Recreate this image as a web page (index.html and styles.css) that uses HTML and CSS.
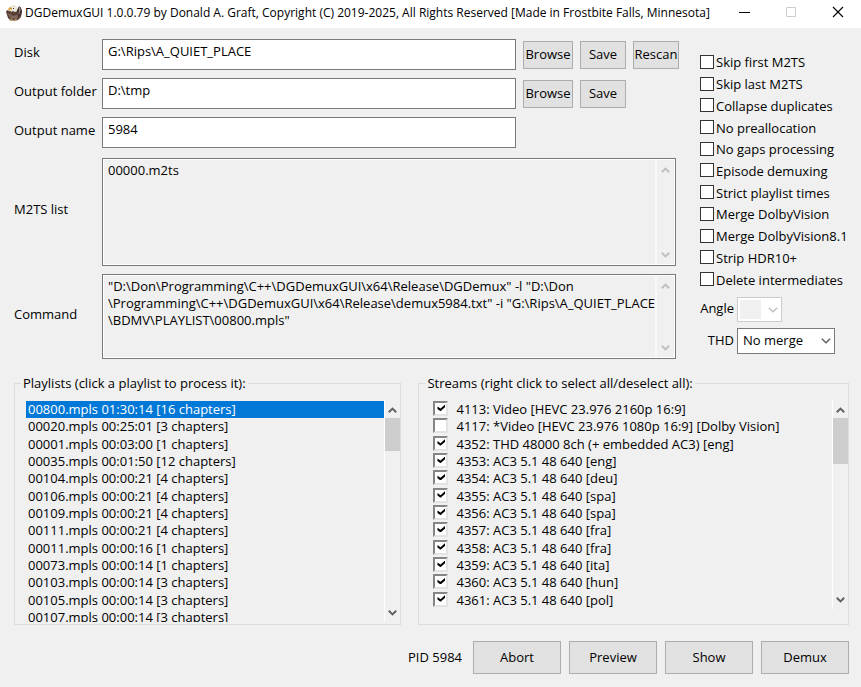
FILE: index.html
```html
<!DOCTYPE html>
<html lang="en">
<head>
    <meta charset="UTF-8">
    <meta name="viewport" content="width=device-width, initial-scale=1.0">
    <title>DGDemuxGUI</title>
    <link rel="stylesheet" href="styles.css">
</head>
<body>
    <svg class="defs" width="0" height="0" aria-hidden="true">
        <symbol id="up" viewBox="0 0 9 6"><path d="M0.8 5.2 4.5 1.6 8.2 5.2" fill="none" stroke="currentColor" stroke-width="2"/></symbol>
        <symbol id="down" viewBox="0 0 9 6"><path d="M0.8 0.8 4.5 4.4 8.2 0.8" fill="none" stroke="currentColor" stroke-width="2"/></symbol>
        <symbol id="drop" viewBox="0 0 10 6"><path d="M0.8 0.8 5 4.8 9.2 0.8" fill="none" stroke="currentColor" stroke-width="1.5"/></symbol>
    </svg>

    <header class="titlebar">
        <svg class="app-icon" viewBox="0 0 16 16" aria-hidden="true">
            <path d="M0 7 1 5l2 1 2-1 6 1 2-1 1-3 1 1 1 4-1 5-3 3-4 1-1-1-2 1-3-3-1-3z" fill="#5b4137"/>
            <path d="M1 8l3 1 3 2 4-1 2-3 1 2-3 4-4 1-3-2z" fill="#80685c"/>
            <path d="M11 5l2-4 2 2 1 4-2 4-2 1z" fill="#443331"/>
            <path d="M13 2l1 4M14 3l-1 6" stroke="#9b8880" fill="none"/>
            <path d="M4 2 6 0h3l2 2v4L9 7 7 6 5 7 4 5z" fill="#eee9df"/>
            <path d="M2 4l2-2 2 1v2L4 4 3 6z" fill="#d99b35"/>
            <path d="M7 3h1v1H7z" fill="#333"/>
            <path d="M4 13l2 1 1 2H5zm5 1 2-1-1 3H8z" fill="#b69a68"/>
        </svg>
        <h1>DGDemuxGUI 1.0.0.79 by Donald A. Graft, Copyright (C) 2019-2025, All Rights Reserved [Made in Frostbite Falls, Minnesota]</h1>
        <div class="window-buttons">
            <button type="button" aria-label="Minimize"><svg width="12" height="12" viewBox="0 0 12 12"><path d="M1 6.5h11" stroke="#000" fill="none"/></svg></button>
            <button type="button" aria-label="Maximize" disabled><svg width="12" height="12" viewBox="0 0 12 12"><path d="M1.5 1.5h9v9h-9z" stroke="#ccc" fill="none"/></svg></button>
            <button type="button" aria-label="Close"><svg width="12" height="12" viewBox="0 0 12 12"><path d="M1 1l10 10M11 1 1 11" stroke="#000" stroke-width="1.1" fill="none"/></svg></button>
        </div>
    </header>

    <main class="window">
        <div class="top">
            <div class="form">
                <label for="disk">Disk</label>
                <input class="field" type="text" id="disk" value="G:\Rips\A_QUIET_PLACE">
                <button type="button" class="btn">Browse</button>
                <button type="button" class="btn">Save</button>
                <button type="button" class="btn">Rescan</button>

                <label for="folder">Output folder</label>
                <input class="field" type="text" id="folder" value="D:\tmp">
                <button type="button" class="btn">Browse</button>
                <button type="button" class="btn">Save</button>

                <label class="first" for="name">Output name</label>
                <input class="field" type="text" id="name" value="5984">

                <label class="first" for="m2ts">M2TS list</label>
                <div class="memo m2ts">
                    <textarea id="m2ts" readonly>00000.m2ts</textarea>
                    <div class="scrollbar off"><svg><use href="#up"/></svg><svg><use href="#down"/></svg></div>
                </div>

                <label class="first" for="command">Command</label>
                <div class="memo command">
                    <textarea id="command" readonly>"D:\Don\Programming\C++\DGDemuxGUI\x64\Release\DGDemux" -l "D:\Don
\Programming\C++\DGDemuxGUI\x64\Release\demux5984.txt" -i "G:\Rips\A_QUIET_PLACE
\BDMV\PLAYLIST\00800.mpls"</textarea>
                    <div class="scrollbar off"><svg><use href="#up"/></svg><svg><use href="#down"/></svg></div>
                </div>
            </div>

            <div class="options">
                <div class="checks">
                    <label><input type="checkbox">Skip first M2TS</label>
                    <label><input type="checkbox">Skip last M2TS</label>
                    <label><input type="checkbox">Collapse duplicates</label>
                    <label><input type="checkbox">No preallocation</label>
                    <label><input type="checkbox">No gaps processing</label>
                    <label><input type="checkbox">Episode demuxing</label>
                    <label><input type="checkbox">Strict playlist times</label>
                    <label><input type="checkbox">Merge DolbyVision</label>
                    <label><input type="checkbox">Merge DolbyVision8.1</label>
                    <label><input type="checkbox">Strip HDR10+</label>
                    <label><input type="checkbox">Delete intermediates</label>
                </div>
                <div class="combos">
                    <label for="angle">Angle</label>
                    <div class="combo small">
                        <select id="angle" disabled></select>
                        <svg><use href="#drop"/></svg>
                    </div>
                    <label for="thd">THD</label>
                    <div class="combo">
                        <select id="thd"><option>No merge</option></select>
                        <svg><use href="#drop"/></svg>
                    </div>
                </div>
            </div>
        </div>

        <div class="groups">
            <fieldset class="group playlists">
                <legend>Playlists (click a playlist to process it):</legend>
                <div class="listbox">
                    <div class="view">
                        <div class="rows">
                            <label><input type="radio" name="playlist" checked>00800.mpls 01:30:14 [16 chapters]</label>
                            <label><input type="radio" name="playlist">00020.mpls 00:25:01 [3 chapters]</label>
                            <label><input type="radio" name="playlist">00001.mpls 00:03:00 [1 chapters]</label>
                            <label><input type="radio" name="playlist">00035.mpls 00:01:50 [12 chapters]</label>
                            <label><input type="radio" name="playlist">00104.mpls 00:00:21 [4 chapters]</label>
                            <label><input type="radio" name="playlist">00106.mpls 00:00:21 [4 chapters]</label>
                            <label><input type="radio" name="playlist">00109.mpls 00:00:21 [4 chapters]</label>
                            <label><input type="radio" name="playlist">00111.mpls 00:00:21 [4 chapters]</label>
                            <label><input type="radio" name="playlist">00011.mpls 00:00:16 [1 chapters]</label>
                            <label><input type="radio" name="playlist">00073.mpls 00:00:14 [1 chapters]</label>
                            <label><input type="radio" name="playlist">00103.mpls 00:00:14 [3 chapters]</label>
                            <label><input type="radio" name="playlist">00105.mpls 00:00:14 [3 chapters]</label>
                            <label><input type="radio" name="playlist">00107.mpls 00:00:14 [3 chapters]</label>
                        </div>
                    </div>
                    <div class="scrollbar"><svg><use href="#up"/></svg><div class="thumb"></div><svg><use href="#down"/></svg></div>
                </div>
            </fieldset>

            <fieldset class="group streams">
                <legend>Streams (right click to select all/deselect all):</legend>
                <div class="listbox">
                    <div class="view">
                        <div class="rows">
                            <label><input type="checkbox" checked>4113: Video [HEVC 23.976 2160p 16:9]</label>
                            <label><input type="checkbox">4117: *Video [HEVC 23.976 1080p 16:9] [Dolby Vision]</label>
                            <label><input type="checkbox" checked>4352: THD 48000 8ch (+ embedded AC3) [eng]</label>
                            <label><input type="checkbox" checked>4353: AC3 5.1 48 640 [eng]</label>
                            <label><input type="checkbox" checked>4354: AC3 5.1 48 640 [deu]</label>
                            <label><input type="checkbox" checked>4355: AC3 5.1 48 640 [spa]</label>
                            <label><input type="checkbox" checked>4356: AC3 5.1 48 640 [spa]</label>
                            <label><input type="checkbox" checked>4357: AC3 5.1 48 640 [fra]</label>
                            <label><input type="checkbox" checked>4358: AC3 5.1 48 640 [fra]</label>
                            <label><input type="checkbox" checked>4359: AC3 5.1 48 640 [ita]</label>
                            <label><input type="checkbox" checked>4360: AC3 5.1 48 640 [hun]</label>
                            <label><input type="checkbox" checked>4361: AC3 5.1 48 640 [pol]</label>
                        </div>
                    </div>
                    <div class="scrollbar"><svg><use href="#up"/></svg><div class="thumb"></div><svg><use href="#down"/></svg></div>
                </div>
            </fieldset>
        </div>

        <footer class="actions">
            <span>PID 5984</span>
            <button type="button" class="btn">Abort</button>
            <button type="button" class="btn">Preview</button>
            <button type="button" class="btn">Show</button>
            <button type="button" class="btn">Demux</button>
        </footer>
    </main>
</body>
</html>
```
FILE: styles.css
```css
* {
    box-sizing: border-box;
}
body {
    margin: 0;
    background: #f0f0f0;
    color: #000;
}
body, input, button, select, textarea {
    font-family: "Open Sans", "Noto Sans", sans-serif;
    font-size: 13px;
    line-height: 17px;
}
.defs {
    position: absolute;
}

/* title bar */
.titlebar {
    display: flex;
    align-items: center;
    height: 28px;
    padding: 0 0 3px 6px;
    background: #fff;
}
.app-icon {
    width: 16px;
    height: 16px;
    margin-right: 3px;
    flex: none;
}
.titlebar h1 {
    flex: 1;
    margin: 0;
    font-size: 12px;
    font-weight: normal;
    white-space: nowrap;
}
.window-buttons {
    display: flex;
    align-self: stretch;
}
.window-buttons button {
    display: flex;
    align-items: center;
    justify-content: center;
    width: 47px;
    padding: 0 0 2px;
    border: 0;
    background: none;
}

/* upper part */
.window {
    padding: 11px 12px 12px 14px;
}
.top {
    display: flex;
    gap: 21px;
}
.form {
    flex: 1;
    display: grid;
    grid-template-columns: 81px minmax(0, 1fr) 50px 46px 46px;
    gap: 8px 7px;
    align-items: center;
}
.form label {
    padding-bottom: 4px;
    white-space: nowrap;
}
.first {
    grid-column: 1;
}
.field {
    width: 100%;
    height: 31px;
    padding: 0 5px 7px;
    border: 1px solid #7a7a7a;
    background: #fff;
}
.btn {
    height: 28px;
    padding: 0;
    border: 1px solid #adadad;
    background: #e1e1e1;
    color: #000;
}
.memo {
    grid-column: 2 / -1;
    display: flex;
    margin-right: 3px;
    padding: 1px;
    border: 1px solid #7a7a7a;
    background: #f0f0f0;
    box-shadow: inset 0 0 0 1px #fff;
}
.m2ts {
    height: 108px;
    margin-top: 2px;
}
.command {
    height: 85px;
}
.memo textarea {
    flex: 1;
    min-width: 0;
    margin: 0;
    padding: 2px 0 2px 4px;
    border: 0;
    background: none;
    resize: none;
    overflow: hidden;
    white-space: pre;
}

/* scroll bars */
.scrollbar {
    display: flex;
    flex-direction: column;
    align-items: center;
    justify-content: space-between;
    flex: none;
    width: 16px;
    padding: 7px 0 6px;
    border-left: 1px solid #fff;
    background: #f0f0f0;
    color: #606060;
}
.scrollbar.off {
    width: 19px;
    border-left-width: 2px;
    border-left-color: #f8f8f8;
    color: #bfbfbf;
}
.scrollbar svg {
    width: 9px;
    height: 6px;
}
.thumb {
    align-self: stretch;
    height: 33px;
    margin: 5px 0 auto;
    background: #cdcdcd;
}

/* options on the right */
.options {
    width: 149px;
    padding-top: 13px;
}
.checks {
    display: grid;
    grid-auto-rows: 1fr;
    height: 239px;
}
.checks label {
    display: flex;
    align-items: center;
    gap: 2px;
    white-space: nowrap;
}
.checks input {
    appearance: none;
    flex: none;
    width: 14px;
    height: 14px;
    margin: 0 0 2px;
    border: 1px solid #333;
    background: #fff;
}
.combos {
    display: grid;
    grid-template-columns: 34px 98px;
    gap: 6px 3px;
    align-items: center;
    justify-items: end;
    margin-top: 6px;
}
.combos label {
    padding-bottom: 2px;
}
.combo {
    position: relative;
    width: 98px;
}
.small {
    justify-self: start;
    width: 45px;
}
.combo select {
    appearance: none;
    display: block;
    width: 100%;
    height: 26px;
    padding: 0 5px 2px;
    border: 1px solid #7a7a7a;
    border-radius: 0;
    background: #fff;
    color: #000;
}
.combo select:disabled {
    height: 25px;
    border-color: #ccc;
    background: linear-gradient(#f0f0f0, #f0f0f0) 2px 2px / 21px 19px no-repeat #fff;
    opacity: 1;
}
.combo svg {
    position: absolute;
    right: 4px;
    top: 10px;
    width: 10px;
    height: 6px;
    color: #606060;
    pointer-events: none;
}
.combo.small svg {
    color: #bfbfbf;
}

/* playlists and streams */
.groups {
    display: grid;
    grid-template-columns: 387fr 430fr;
    gap: 17px;
    margin-top: 16px;
}
.group {
    min-width: 0;
    height: 250px;
    margin: 0;
    padding: 8px 0 0 11px;
    border: 1px solid #dcdcdc;
}
.streams {
    padding-left: 14px;
}
.group legend {
    margin-left: -5px;
    padding: 0 2px;
}
.streams legend {
    margin-left: -8px;
}
.listbox {
    display: flex;
}
.view {
    flex: 1;
    height: 222px;
    padding-top: 1px;
    overflow: hidden;
}
.rows {
    display: grid;
    grid-auto-rows: 1fr;
    height: 225px;
}
.rows label {
    display: flex;
    align-items: center;
    white-space: nowrap;
}
.playlists .rows label {
    padding-left: 2px;
}
.playlists input {
    appearance: none;
    width: 0;
    height: 0;
    margin: 0;
}
.playlists label:has(:checked) {
    background: #0078d7;
    color: #fff;
}
.streams .view {
    height: 209px;
}
.streams .rows {
    height: 208px;
}
.streams .thumb {
    height: 46px;
}
.streams input {
    appearance: none;
    flex: none;
    width: 15px;
    height: 15px;
    margin: 0 8px 2px 0;
    border: 2px solid;
    border-color: #858585 #e3e3e3 #e3e3e3 #858585;
    background: #fff;
}
.streams input:checked::before {
    content: "";
    display: block;
    width: 8px;
    height: 7px;
    margin: 1px 2px;
    background: #000;
    clip-path: polygon(0 32%, 38% 62%, 100% 0, 100% 38%, 38% 100%, 0 68%);
}

/* bottom buttons */
.actions {
    display: flex;
    align-items: center;
    justify-content: flex-end;
    gap: 8px;
    margin-top: 16px;
}
.actions span {
    margin-right: 3px;
}
.actions .btn {
    width: 88px;
    height: 33px;
}
```
